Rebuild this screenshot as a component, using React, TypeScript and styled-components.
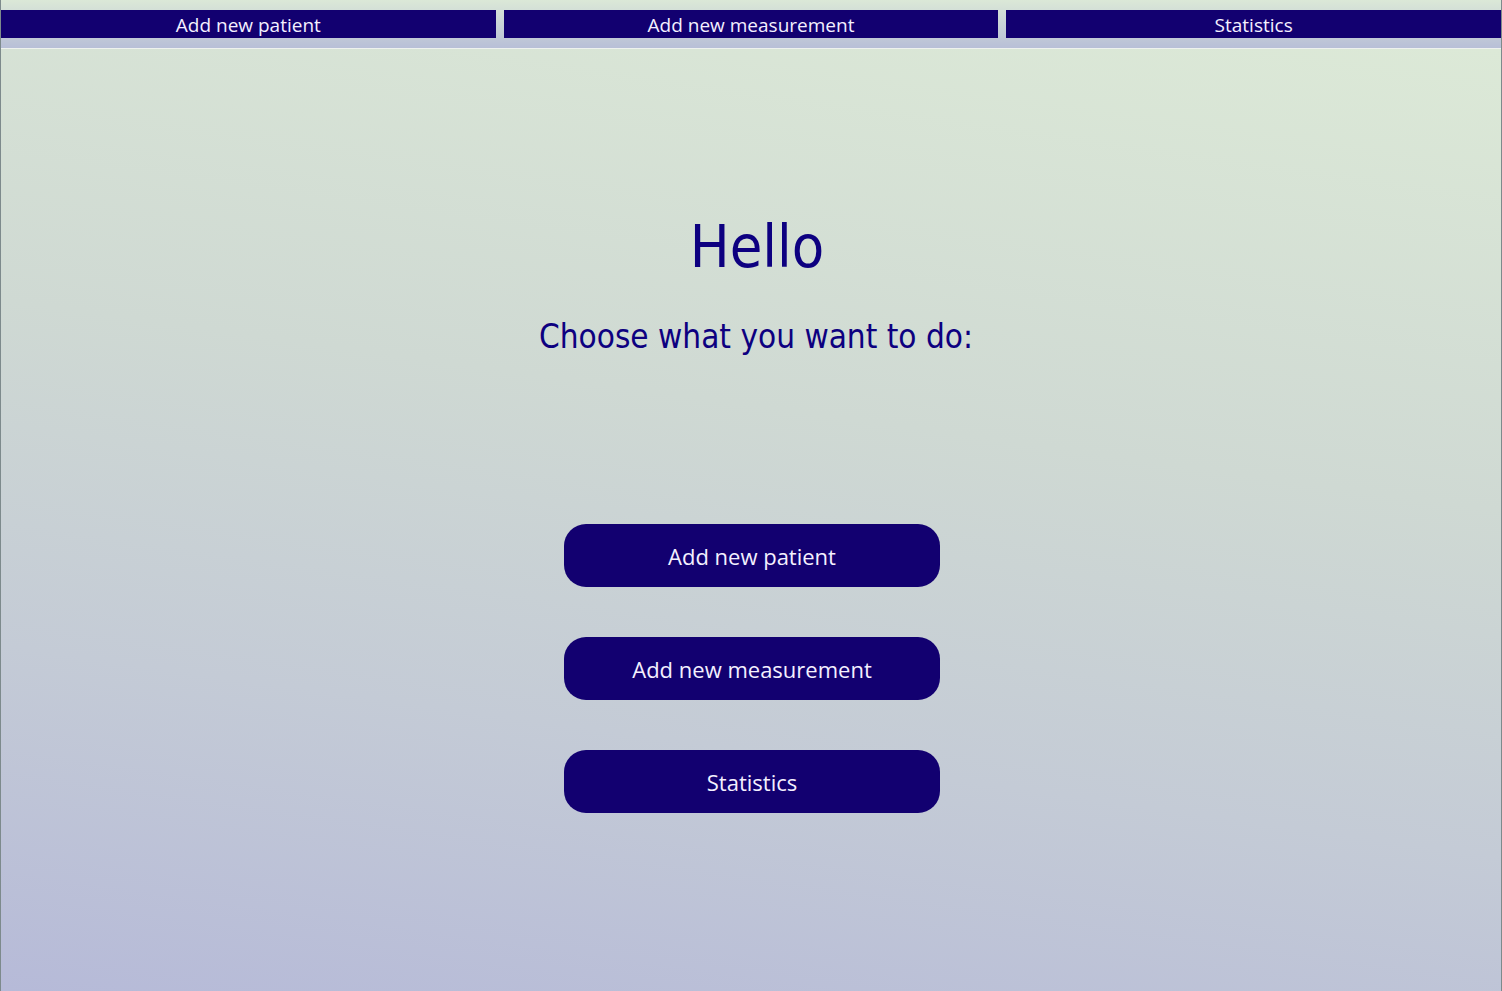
import styled, { createGlobalStyle } from "styled-components";

const GlobalStyle = createGlobalStyle`
  html, body {
    margin: 0;
    padding: 0;
  }
  body {
    font-family: "Open Sans", "Noto Sans", sans-serif;
  }
`;

const Page = styled.div`
  display: flex;
  flex-direction: column;
  min-height: 100vh;
  border-left: 1px solid #7d8a8c;
  border-right: 1px solid #7d8a8c;
  box-sizing: border-box;
`;

const TopBar = styled.nav`
  display: grid;
  grid-template-columns: 1fr 1fr 1fr;
  column-gap: 8px;
  padding: 10px 0;
  background: linear-gradient(to bottom, #dbe8d7, #b8bfd7);
  border-bottom: 1px solid #eef2ee;
`;

const TopLink = styled.a`
  display: block;
  height: 28px;
  line-height: 30px;
  background: #120070;
  color: #f4f0ff;
  font-size: 19px;
  text-align: center;
  text-decoration: none;
  cursor: pointer;
`;

const Main = styled.main`
  flex: 1;
  display: flex;
  flex-direction: column;
  align-items: center;
  padding-top: 158px;
  background: linear-gradient(188deg, #dce9d7 0%, #cfd9d3 40%, #c4cbd6 70%, #b6bad8 100%);
`;

const Title = styled.h1`
  margin: 0;
  padding-left: 12px;
  font-family: "DejaVu Sans Condensed", "DejaVu Sans", sans-serif;
  font-weight: normal;
  font-size: 59px;
  line-height: 80px;
  color: #0d0080;
`;

const Subtitle = styled.h2`
  margin: 30px 0 0;
  padding-left: 10px;
  font-family: "DejaVu Sans Condensed", "DejaVu Sans", sans-serif;
  font-weight: normal;
  font-size: 33px;
  line-height: 40px;
  color: #0d0080;
`;

const Actions = styled.div`
  display: flex;
  flex-direction: column;
  gap: 50px;
  margin-top: 167px;
  padding-left: 2px;
`;

const ActionButton = styled.button`
  width: 376px;
  height: 63px;
  border: none;
  border-radius: 22px;
  background: #120070;
  color: #f4f0ff;
  font-family: "Open Sans", "Noto Sans", sans-serif;
  font-size: 22px;
  cursor: pointer;
`;

const links = ["Add new patient", "Add new measurement", "Statistics"];

export default function App() {
  return (
    <>
      <GlobalStyle />
      <Page>
        <TopBar>
          {links.map((l) => (
            <TopLink key={l}>{l}</TopLink>
          ))}
        </TopBar>
        <Main>
          <Title>Hello</Title>
          <Subtitle>Choose what you want to do:</Subtitle>
          <Actions>
            {links.map((l) => (
              <ActionButton key={l}>{l}</ActionButton>
            ))}
          </Actions>
        </Main>
      </Page>
    </>
  );
}
